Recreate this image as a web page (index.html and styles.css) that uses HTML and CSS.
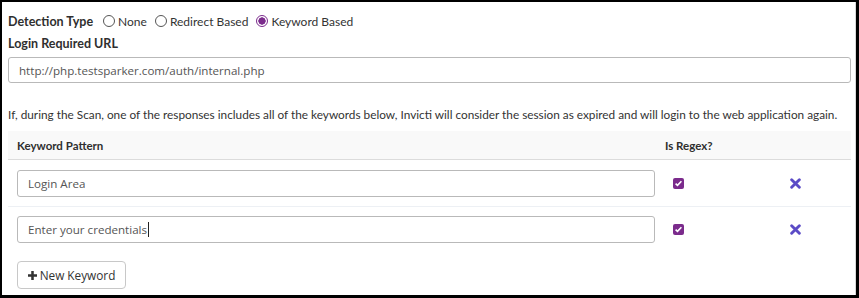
FILE: index.html
```html
<!DOCTYPE html>
<html>
<head>
<meta charset="utf-8">
<link rel="stylesheet" href="styles.css">
</head>
<body>
<div class="frame">
  <div class="detect-row">
    <span class="label">Detection Type</span>
    <span class="radio"><span class="dot"></span>None</span>
    <span class="radio"><span class="dot"></span>Redirect Based</span>
    <span class="radio"><span class="dot checked"></span>Keyword Based</span>
  </div>
  <div class="label block">Login Required URL</div>
  <div class="input url">http://php.testsparker.com/auth/internal.php</div>
  <p class="info">If, during the Scan, one of the responses includes all of the keywords below, Invicti will consider the session as expired and will login to the web application again.</p>
  <div class="table">
    <div class="thead">
      <div class="th c1">Keyword Pattern</div>
      <div class="th c2">Is Regex?</div>
      <div class="th c3"></div>
    </div>
    <div class="tr">
      <div class="td c1"><div class="input">Login Area</div></div>
      <div class="td c2"><span class="check"><svg viewBox="0 0 11 11" width="11" height="11"><path d="M2.6 5.6 L4.5 7.4 L8.4 3.3" fill="none" stroke="#fff" stroke-width="1.6"/></svg></span></div>
      <div class="td c3"><svg class="x" viewBox="0 0 10 10" width="11" height="11"><path d="M1.5 1.5 L8.5 8.5 M8.5 1.5 L1.5 8.5" fill="none" stroke="#5b4bc6" stroke-width="2.6" stroke-linecap="round"/></svg></div>
    </div>
    <div class="tr last">
      <div class="td c1"><div class="input">Enter your credentials<span class="caret"></span></div></div>
      <div class="td c2"><span class="check"><svg viewBox="0 0 11 11" width="11" height="11"><path d="M2.6 5.6 L4.5 7.4 L8.4 3.3" fill="none" stroke="#fff" stroke-width="1.6"/></svg></span></div>
      <div class="td c3"><svg class="x" viewBox="0 0 10 10" width="11" height="11"><path d="M1.5 1.5 L8.5 8.5 M8.5 1.5 L1.5 8.5" fill="none" stroke="#5b4bc6" stroke-width="2.6" stroke-linecap="round"/></svg></div>
    </div>
  </div>
  <div class="btn-row">
    <button class="btn"><svg viewBox="0 0 10 10" width="9" height="9"><path d="M3.6 0 H6.4 V3.6 H10 V6.4 H6.4 V10 H3.6 V6.4 H0 V3.6 H3.6 Z" fill="#333"/></svg>New Keyword</button>
  </div>
</div>
</body>
</html>
```
FILE: styles.css
```css
html, body {
  margin: 0;
  background: #000;
}
body {
  padding: 2px 3px 3px 2px;
  height: 298px;
  box-sizing: border-box;
}
.frame {
  background: #fff;
  height: 293px;
  box-sizing: border-box;
  border-right: 1px solid #d8d8d8;
  padding: 9px 4px 0 6px;
  overflow: hidden;
  font-family: Lato, "Liberation Sans", sans-serif;
  color: #2f2f2f;
}
.detect-row {
  display: flex;
  align-items: center;
  height: 20px;
  font-size: 12px;
}
.label {
  font-weight: 700;
  font-size: 12.5px;
  margin-right: 10px;
}
.block {
  display: block;
  margin-top: 4px;
  line-height: 18px;
  margin-right: 0;
}
.radio {
  display: inline-flex;
  align-items: center;
  margin-right: 8px;
  color: #333;
}
.dot {
  width: 12px;
  height: 12px;
  box-sizing: border-box;
  border: 1px solid #555;
  border-radius: 50%;
  margin-right: 3px;
  background: #fff;
}
.dot.checked {
  border: 1.5px solid #7b2b8c;
  background: radial-gradient(circle, #7b2b8c 0 3.4px, #fff 3.9px);
}
.input {
  box-sizing: border-box;
  height: 27px;
  border: 1px solid #b9b9b9;
  border-radius: 3px;
  padding: 0 10px;
  display: flex;
  align-items: center;
  font-family: "Open Sans", sans-serif;
  font-size: 11.6px;
  color: #555;
  background: #fff;
}
.url {
  margin-top: 4px;
  height: 26px;
}
.info {
  margin: 23px 0 0;
  line-height: 18px;
  font-size: 11.8px;
  color: #333;
  white-space: nowrap;
}
.table {
  margin-top: 7px;
}
.thead {
  display: flex;
  background: #f9f9f9;
  height: 28px;
  align-items: center;
  border-bottom: 1px solid #dcdcdc;
}
.th {
  font-size: 11.5px;
  font-weight: 700;
  color: #2f2f2f;
}
.c1 { width: 656px; box-sizing: border-box; padding: 0 9px; }
.c2 { width: 126px; box-sizing: border-box; padding-left: 1px; }
.c3 { flex: 1; }
.tr {
  display: flex;
  align-items: center;
  padding: 10px 0 9px;
  border-bottom: 1px solid #edf0f4;
}
.tr.last {
  border-bottom: none;
  padding-top: 9px;
}
.td.c2 { padding-left: 9px; display: flex; }
.td.c3 { display: flex; }
.check {
  width: 11px;
  height: 11px;
  border-radius: 2px;
  background: #7b2b8c;
  display: flex;
}
.x { display: block; }
.caret {
  display: inline-block;
  width: 1px;
  height: 15px;
  background: #222;
  margin-left: 1px;
}
.btn-row {
  padding: 9px 0 0 9px;
}
.btn {
  height: 28px;
  width: 109px;
  box-sizing: border-box;
  border: 1px solid #c8c8c8;
  border-radius: 4px;
  background: #fff;
  font-family: "Open Sans", sans-serif;
  font-size: 11.8px;
  color: #333;
  display: flex;
  align-items: center;
  justify-content: center;
  gap: 3px;
  padding: 0;
}
```
